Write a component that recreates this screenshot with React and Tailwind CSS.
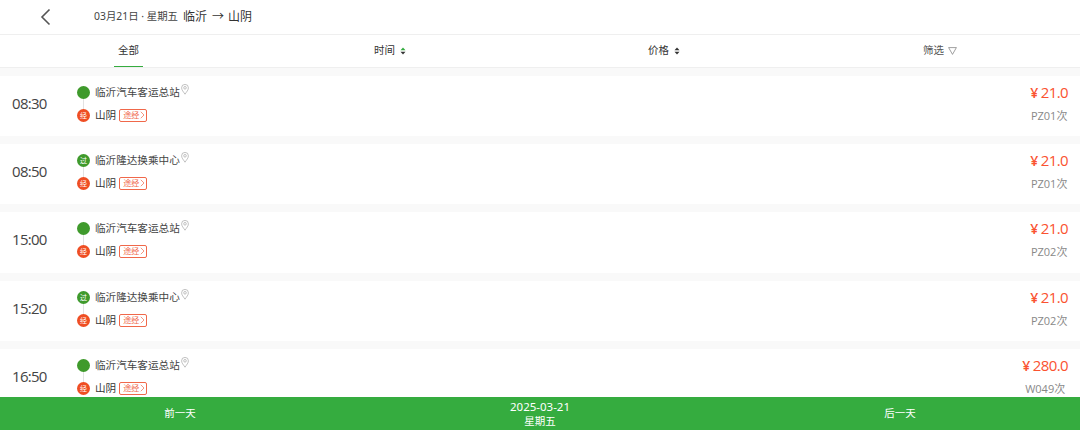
const font = '[font-family:"Noto_Sans","Noto_Sans_CJK_SC",sans-serif]';

const rows = [
  { time: "08:30", from: "临沂汽车客运总站", transfer: false, price: "21.0", code: "PZ01次", h: "h-[60px]" },
  { time: "08:50", from: "临沂隆达换乘中心", transfer: true, price: "21.0", code: "PZ01次", h: "h-[60px]" },
  { time: "15:00", from: "临沂汽车客运总站", transfer: false, price: "21.0", code: "PZ02次", h: "h-[61px]" },
  { time: "15:20", from: "临沂隆达换乘中心", transfer: true, price: "21.0", code: "PZ02次", h: "h-[60px]" },
  { time: "16:50", from: "临沂汽车客运总站", transfer: false, price: "280.0", code: "W049次", h: "h-[60px]" },
];

function Pin() {
  return (
    <svg width="8" height="11" viewBox="0 0 8 11" fill="none" stroke="#a8a8a8" strokeWidth="0.7" className="mb-[5px] ml-px">
      <path d="M4 10.2C2.4 7.8 .6 6 .6 3.8a3.4 3.4 0 0 1 6.8 0C7.4 6 5.6 7.8 4 10.2z" />
      <circle cx="4" cy="3.8" r="1.3" />
    </svg>
  );
}

function Sort({ active }) {
  return (
    <svg width="6" height="8" viewBox="0 0 6 8" className="ml-[5px]">
      <path d="M3 0.5 5.5 3.2H.5z" fill={active ? "#35ac3f" : "#333"} />
      <path d="M3 7.5 5.5 4.8H.5z" fill="#333" />
    </svg>
  );
}

function Row({ r }) {
  return (
    <div className={`flex ${r.h} shrink-0 items-start bg-white`}>
      <div className="w-[77px] pl-3 pt-[19px] [font-family:'Open_Sans'] text-[15px] leading-[16px] tracking-[-0.7px] text-[#444]">{r.time}</div>
      <div className="relative flex flex-col gap-[9px] pt-[9px]">
        <div className="absolute left-[5.5px] top-[21px] h-[14px] w-px bg-[#e2e2e2]" />
        <div className="relative flex h-[14px] items-center">
          <span className="flex h-[13px] w-[13px] items-center justify-center rounded-full bg-[#3f9a2c] text-[7px] leading-none text-white">
            {r.transfer ? "过" : ""}
          </span>
          <span className="ml-[5px] text-[10.6px] leading-none text-[#444]">{r.from}</span>
          <Pin />
        </div>
        <div className="relative flex h-[14px] items-center">
          <span className="flex h-[13px] w-[13px] items-center justify-center rounded-full bg-[#ef4e23] text-[7px] leading-none text-white">
            经
          </span>
          <span className="ml-[5px] text-[10.6px] leading-none text-[#333]">山阴</span>
          <span className="ml-[3px] flex h-[13px] w-[28px] items-center rounded-[2px] border border-[#f0684a] pl-[3px] text-[8px] leading-none text-[#f0684a]">
            途经
            <svg width="5" height="8" viewBox="0 0 5 8" fill="none" stroke="#f0684a" strokeWidth="0.7" className="ml-px">
              <path d="M.8 .8 4 4 .8 7.2" />
            </svg>
          </span>
        </div>
      </div>
      <div className="ml-auto flex flex-col items-center pr-3 pt-[6px]">
        <div className="[font-family:'Open_Sans'] text-[15px] leading-[20px] tracking-[-0.6px] text-[#fa5230]">
          <span className="mr-[3px] text-[14px] font-semibold">¥</span>
          {r.price}
        </div>
        <div className="mt-[5px] [font-family:'Open_Sans','Noto_Sans_CJK_SC'] text-[11px] leading-[16px] text-[#888]">{r.code}</div>
      </div>
    </div>
  );
}

export default function App() {
  return (
    <div className={`flex h-[447px] w-[1080px] flex-col overflow-hidden bg-white ${font}`}>
      <header className="flex h-[35px] shrink-0 items-center border-b border-[#efefef] bg-white">
        <svg width="12" height="18" viewBox="0 0 12 18" fill="none" stroke="#555" strokeWidth="1.6" className="ml-[40px]">
          <path d="M9.5 1.5 2 9l7.5 7.5" />
        </svg>
        <span className="ml-[42px] text-[10.4px] text-[#444]">03月21日 · 星期五</span>
        <span className="ml-[5px] text-[12px] text-[#333]">临沂</span>
        <span className="ml-[5px] text-[12px] text-[#333]">→</span>
        <span className="ml-[4px] text-[12px] text-[#333]">山阴</span>
      </header>
      <nav className="flex h-[33px] shrink-0 items-center border-b border-[#efefef] bg-white text-[10.5px] text-[#333]">
        <div className="relative ml-[114px] flex h-full w-[29px] items-center justify-center">
          全部
          <span className="absolute bottom-0 left-0 h-px w-[29px] bg-[#35ac3f]" />
        </div>
        <div className="ml-[231px] flex w-[40px] items-center">时间<Sort active /></div>
        <div className="ml-[234px] flex w-[40px] items-center">价格<Sort /></div>
        <div className="ml-[235px] flex items-center text-[#555]">
          筛选
          <svg width="9" height="8" viewBox="0 0 9 8" fill="none" stroke="#777" strokeWidth="0.7" className="ml-[4px]">
            <path d="M.6 .6h7.8L4.5 7.4z" />
          </svg>
        </div>
      </nav>
      <main className="flex min-h-0 flex-1 flex-col gap-2 overflow-hidden bg-[#f9f9f9] pt-2">
        {rows.map((r) => <Row key={r.time} r={r} />)}
      </main>
      <footer className="grid h-[33px] shrink-0 grid-cols-3 bg-[#35ac3f] text-[10.5px] text-white">
        <div className="flex items-center justify-center">前一天</div>
        <div className="flex flex-col items-center justify-center leading-[14px]">
          <span className="text-[11.5px]">2025-03-21</span>
          <span>星期五</span>
        </div>
        <div className="flex items-center justify-center">后一天</div>
      </footer>
      <div className="h-[17px] shrink-0 bg-white" />
    </div>
  );
}
